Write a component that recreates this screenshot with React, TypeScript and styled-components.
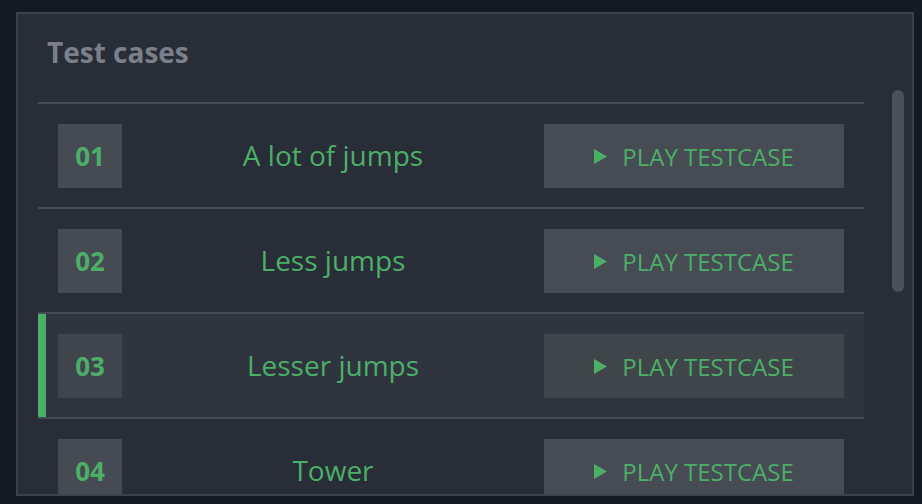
import React from "react";
import styled, { createGlobalStyle } from "styled-components";

const Global = createGlobalStyle`
  html, body { margin: 0; padding: 0; background: #141a23; }
  body { width: 922px; height: 504px; overflow: hidden; font-family: "Open Sans", "Noto Sans", sans-serif; }
  * { box-sizing: border-box; }
`;

const Page = styled.div`
  padding: 12px 8px 8px 16px;
  height: 504px;
  display: flex;
`;

const Panel = styled.section`
  flex: 1;
  background: #282d37;
  border: 2px solid #3c414a;
  display: flex;
  overflow: hidden;
`;

const Main = styled.div`
  flex: 1;
  padding: 0 0 0 20px;
  display: flex;
  flex-direction: column;
  min-width: 0;
`;

const Title = styled.h2`
  margin: 0;
  padding: 22px 0 0 9px;
  height: 88px;
  flex-shrink: 0;
  font-size: 28px;
  font-weight: 700;
  color: #7a7f8a;
  line-height: 32px;
`;

const List = styled.div`
  border-top: 2px solid #464b55;
  display: flex;
  flex-direction: column;
`;

const Row = styled.div<{ $active?: boolean }>`
  display: flex;
  align-items: center;
  padding: 20px 20px 19px 20px;
  border-bottom: 2px solid #464b55;
  background: ${(p) => (p.$active ? "#2f343e" : "transparent")};
  box-shadow: ${(p) => (p.$active ? "inset 8px 0 0 #4caf68" : "none")};
  flex-shrink: 0;
`;

const Num = styled.div<{ $active?: boolean }>`
  width: 64px;
  height: 64px;
  background: ${(p) => (p.$active ? "#40454d" : "#454a53")};
  color: #4caf68;
  font-weight: 700;
  font-size: 26px;
  display: flex;
  align-items: center;
  justify-content: center;
`;

const Name = styled.div`
  flex: 1;
  text-align: center;
  color: #4caf68;
  font-size: 28px;
  line-height: 34px;
  padding-bottom: 2px;
`;

const PlayButton = styled.button<{ $active?: boolean }>`
  width: 300px;
  height: 64px;
  border: none;
  background: ${(p) => (p.$active ? "#40454a" : "#464b54")};
  color: #4caf68;
  font-family: inherit;
  font-size: 24px;
  display: flex;
  align-items: center;
  justify-content: center;
  gap: 15px;
  padding: 0;
  cursor: pointer;
  text-transform: uppercase;
`;

const Scroll = styled.div`
  width: 48px;
  flex-shrink: 0;
  padding: 76px 8px 0 28px;
`;

const Thumb = styled.div`
  width: 12px;
  height: 202px;
  border-radius: 6px;
  background: #4b505a;
`;

const Play = () => (
  <svg width="13" height="15" viewBox="0 0 13 15" aria-hidden>
    <path d="M0 0 L13 7.5 L0 15 Z" fill="#4caf68" />
  </svg>
);

const cases = [
  { n: "01", name: "A lot of jumps" },
  { n: "02", name: "Less jumps" },
  { n: "03", name: "Lesser jumps", active: true },
  { n: "04", name: "Tower" },
];

export default function App() {
  return (
    <>
      <Global />
      <Page>
        <Panel>
          <Main>
            <Title>Test cases</Title>
            <List>
              {cases.map((c) => (
                <Row key={c.n} $active={c.active}>
                  <Num $active={c.active}>{c.n}</Num>
                  <Name>{c.name}</Name>
                  <PlayButton $active={c.active}>
                    <Play />
                    <span>Play testcase</span>
                  </PlayButton>
                </Row>
              ))}
            </List>
          </Main>
          <Scroll>
            <Thumb />
          </Scroll>
        </Panel>
      </Page>
    </>
  );
}
